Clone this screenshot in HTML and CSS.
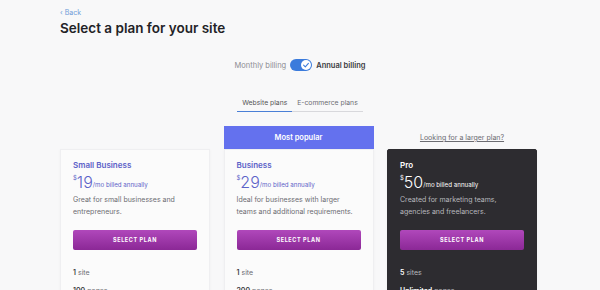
FILE: index.html
```html
<!DOCTYPE html>
<html>
<head>
<meta charset="utf-8">
<link rel="stylesheet" href="styles.css">
</head>
<body>
<div class="page">
  <a class="back" href="#">&#8249; Back</a>
  <h1 class="title">Select a plan for your site</h1>

  <div class="billing">
    <span class="bill-label">Monthly billing</span>
    <span class="toggle"><span class="knob"><svg width="8" height="8" viewBox="0 0 8 8"><path d="M1.6 4.2 L3.3 5.8 L6.4 2.3" fill="none" stroke="#3b7bdc" stroke-width="1.1" stroke-linecap="round" stroke-linejoin="round"/></svg></span></span>
    <span class="bill-label active">Annual billing</span>
  </div>

  <div class="tabs">
    <span class="tab active">Website plans</span>
    <span class="tab">E-commerce plans</span>
  </div>

  <div class="plans">
    <div class="col">
      <div class="top"></div>
      <div class="card">
        <div class="name">Small Business</div>
        <div class="price"><span class="cur">$</span><span class="amt">19</span><span class="per">/mo billed annually</span></div>
        <p class="desc">Great for small businesses and entrepreneurs.</p>
        <button class="btn">SELECT PLAN</button>
        <ul class="feats"><li><b>1</b> site</li><li><b>100</b> pages</li></ul>
      </div>
    </div>
    <div class="col">
      <div class="top popular">Most popular</div>
      <div class="card">
        <div class="name">Business</div>
        <div class="price"><span class="cur">$</span><span class="amt">29</span><span class="per">/mo billed annually</span></div>
        <p class="desc">Ideal for businesses with larger teams and additional requirements.</p>
        <button class="btn">SELECT PLAN</button>
        <ul class="feats"><li><b>1</b> site</li><li><b>200</b> pages</li></ul>
      </div>
    </div>
    <div class="col">
      <div class="top"><a class="larger" href="#">Looking for a larger plan?</a></div>
      <div class="card dark">
        <div class="name">Pro</div>
        <div class="price"><span class="cur">$</span><span class="amt">50</span><span class="per">/mo billed annually</span></div>
        <p class="desc">Created for marketing teams, agencies and freelancers.</p>
        <button class="btn">SELECT PLAN</button>
        <ul class="feats"><li><b>5</b> sites</li><li><b>Unlimited</b> pages</li></ul>
      </div>
    </div>
  </div>
</div>
</body>
</html>
```

FILE: styles.css
```css
* { box-sizing: border-box; }
html, body { margin: 0; padding: 0; }
body {
  background: #f8f8f9;
  font-family: Inter, "Liberation Sans", sans-serif;
  color: #2b2b2e;
  overflow: hidden;
}
.page { padding: 8px 0 0 60px; width: 600px; }
.back {
  display: block;
  font-size: 7px;
  line-height: 10px;
  color: #6f9bd8;
  text-decoration: none;
}
.title {
  margin: 1px 0 0 0;
  font-size: 13.5px;
  line-height: 18px;
  font-weight: 600;
  color: #222226;
}
.billing {
  display: flex;
  align-items: center;
  justify-content: center;
  gap: 4px;
  margin: 21px 0 0 -60px;
  height: 14px;
}
.bill-label { font-size: 7.5px; color: #8c8c92; }
.bill-label.active { color: #3a3a40; font-weight: 600; }
.toggle {
  width: 22px; height: 12px;
  border-radius: 6px;
  background: #3b7bdc;
  display: flex; align-items: center; justify-content: flex-end;
  padding: 1px;
}
.knob {
  width: 10px; height: 10px; border-radius: 50%;
  background: #fff;
  display: flex; align-items: center; justify-content: center;
}
.tabs {
  display: flex;
  justify-content: center;
  margin: 25px 0 0 -60px;
}
.tab {
  font-size: 6.8px;
  line-height: 12px;
  color: #6e6e74;
  padding: 0 5px 2px;
  border-bottom: 1px solid #d8d8dc;
}
.tab.active { color: #555; border-bottom: 1px solid #4a7fd6; }
.plans {
  display: grid;
  grid-template-columns: 150px 150px 150px;
  column-gap: 13.5px;
  margin-top: 14px;
}
.col { display: flex; flex-direction: column; }
.top {
  height: 23px;
  display: flex; align-items: center; justify-content: center;
}
.popular {
  background: #6471ee;
  color: #fff;
  font-size: 7.5px;
  font-weight: 600;
}
.larger {
  color: #6c6c72;
  font-size: 7px;
  text-decoration: underline;
}
.card {
  background: #fbfbfb;
  border: 1px solid #efeff1;
  box-shadow: 0 1px 3px rgba(0,0,0,0.04);
  padding: 9px 12px 0;
  height: 200px;
}
.card.dark {
  background: #2d2c30;
  border-color: #2d2c30;
  border-radius: 2px;
}
.name { font-size: 8px; line-height: 12px; font-weight: 600; color: #5c62c8; }
.dark .name { color: #fff; }
.price { display: flex; align-items: flex-end; margin-top: 1px; color: #5c62c8; height: 20px; }
.dark .price { color: #fff; }
.cur { font-size: 6px; align-self: flex-start; margin-top: 2px; }
.amt { font-size: 16px; line-height: 20px; font-weight: 300; }
.per { font-size: 6.2px; line-height: 10px; padding-bottom: 2px; }
.desc {
  margin: 2px 0 0;
  font-size: 7px;
  line-height: 12px;
  color: #6c6c72;
}
.dark .desc { color: #b8b8bd; }
.btn {
  display: block;
  width: 100%;
  height: 20px;
  margin-top: 12px;
  border: 0;
  border-radius: 2px;
  background: linear-gradient(#b048bb, #8b2896);
  color: #fff;
  font-family: inherit;
  font-size: 5.5px;
  font-weight: 700;
  letter-spacing: 0.6px;
}
.feats { list-style: none; margin: 14px 0 0; padding: 0; }
.feats li { font-size: 7px; line-height: 18px; color: #6c6c72; }
.feats b { color: #3a3a40; font-weight: 600; }
.dark .feats li { color: #b8b8bd; }
.dark .feats b { color: #fff; }
```
